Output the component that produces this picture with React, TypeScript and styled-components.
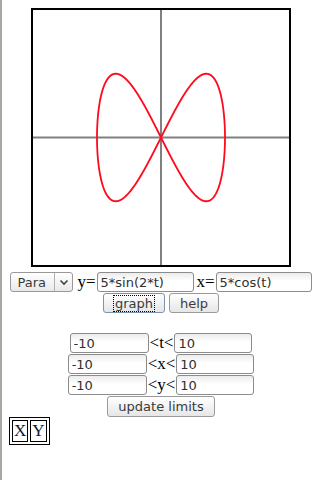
import React from "react";
import styled, { createGlobalStyle } from "styled-components";

const GlobalStyle = createGlobalStyle`
  html, body {
    margin: 0;
    padding: 0;
    background: #ffffff;
  }
  body {
    border-left: 2px solid #a9a7a1;
    min-height: 480px;
    box-sizing: border-box;
    padding: 8px 0 0 7px;
    font-family: "Liberation Serif", serif;
    font-size: 16px;
    color: #000;
  }
`;

const Page = styled.div`
  display: flex;
  flex-direction: column;
  align-items: flex-start;
  width: 304px;
`;

const Center = styled.div<{ $gap?: number }>`
  align-self: stretch;
  display: flex;
  flex-direction: column;
  align-items: center;
  margin-top: ${(p) => p.$gap ?? 0}px;
`;

const Plot = styled.div`
  width: 256px;
  height: 255px;
  border: 2px solid #000;
  background: #fff;
`;

const Row = styled.div<{ $top?: number }>`
  display: flex;
  align-items: center;
  justify-content: center;
  white-space: nowrap;
  margin-top: ${(p) => p.$top ?? 0}px;
`;

const Label = styled.span<{ $left?: number }>`
  font-family: "Liberation Serif", serif;
  font-size: 17px;
  line-height: 20px;
  color: #000;
  padding: 0 1px;
  margin-left: ${(p) => p.$left ?? 0}px;
`;

const Field = styled.input<{ $w: number }>`
  box-sizing: border-box;
  width: ${(p) => p.$w}px;
  height: 20px;
  margin: 0;
  padding: 0 3px;
  border: 1px solid #8c8c8c;
  border-radius: 3px;
  background: linear-gradient(#ececec, #ffffff 45%);
  font-family: "DejaVu Sans", sans-serif;
  font-size: 13px;
  color: #2f2f2f;
  outline: none;
`;

const SelectBox = styled.div`
  position: relative;
  box-sizing: border-box;
  width: 63px;
  height: 20px;
  border: 1px solid #999;
  border-radius: 3px;
  background: linear-gradient(#ffffff, #e9e9e9);
  display: flex;
  align-items: center;
`;

const SelectText = styled.span`
  flex: 1;
  padding-left: 6px;
  font-family: "DejaVu Sans", sans-serif;
  font-size: 13px;
  color: #3a3a3a;
`;

const SelectArrow = styled.span`
  width: 17px;
  height: 100%;
  border-left: 1px solid #b3b3b3;
  display: flex;
  align-items: center;
  justify-content: center;
`;

const Button = styled.button<{ $focus?: boolean; $h?: number }>`
  box-sizing: border-box;
  height: ${(p) => p.$h ?? 20}px;
  margin: 0 2px;
  padding: 0 10px;
  border: 1px solid ${(p) => (p.$focus ? "#7d93ad" : "#9a9a9a")};
  border-radius: 3px;
  background: linear-gradient(#ffffff, #e6e6e6);
  font-family: "DejaVu Sans", sans-serif;
  font-size: 13px;
  color: #3a3a3a;
  display: flex;
  align-items: center;
  justify-content: center;
`;

const FocusRing = styled.span`
  outline: 1px dotted #000;
  padding: 0 1px;
  line-height: 15px;
`;

const XYTable = styled.table`
  margin: 0;
  border: 1px solid #000;
  border-spacing: 2px;
`;

const XYCell = styled.td`
  border: 1px solid #000;
  padding: 1px;
  font-family: "Liberation Serif", serif;
  font-size: 17px;
  line-height: 18px;
  color: #0a1a3a;
`;

const W = 256;
const H = 255;

function curvePath() {
  const pts: string[] = [];
  for (let i = 0; i <= 2000; i++) {
    const t = -10 + (20 * i) / 2000;
    const x = 5 * Math.cos(t);
    const y = 5 * Math.sin(2 * t);
    const px = ((x + 10) / 20) * W;
    const py = ((10 - y) / 20) * H;
    pts.push(`${i === 0 ? "M" : "L"}${px.toFixed(2)} ${py.toFixed(2)}`);
  }
  return pts.join(" ");
}

const Graph = () => {
  const d = React.useMemo(curvePath, []);
  return (
    <Plot>
      <svg width={W} height={H} viewBox={`0 0 ${W} ${H}`}>
        <line x1={W / 2} y1={0} x2={W / 2} y2={H} stroke="#808080" strokeWidth={2} />
        <line x1={0} y1={H / 2} x2={W} y2={H / 2} stroke="#808080" strokeWidth={2} />
        <path d={d} fill="none" stroke="#ff0a1e" strokeWidth={1.8} />
      </svg>
    </Plot>
  );
};

const LimitRow = ({ v, top }: { v: string; top: number }) => (
  <Row $top={top}>
    <Field $w={79} defaultValue="-10" />
    <Label>&lt;{v}&lt;</Label>
    <Field $w={78} defaultValue="10" />
  </Row>
);

export default function App() {
  return (
    <>
      <GlobalStyle />
      <Page>
        <Center>
          <Graph />
          <Row $top={5}>
            <SelectBox>
              <SelectText>Para</SelectText>
              <SelectArrow>
                <svg width="10" height="7" viewBox="0 0 10 7">
                  <path d="M1.5 1.5 L5 5 L8.5 1.5" fill="none" stroke="#444" strokeWidth="1.6" />
                </svg>
              </SelectArrow>
            </SelectBox>
            <Label $left={3}>y=</Label>
            <Field $w={97} defaultValue="5*sin(2*t)" />
            <Label $left={2}>x=</Label>
            <Field $w={96} defaultValue="5*cos(t)" />
          </Row>
          <Row $top={1}>
            <Button $focus>
              <FocusRing>graph</FocusRing>
            </Button>
            <Button>help</Button>
          </Row>
        </Center>
        <Center $gap={20}>
          <LimitRow v="t" top={0} />
          <LimitRow v="x" top={1} />
          <LimitRow v="y" top={1} />
          <Row $top={1}>
            <Button $h={21}>update limits</Button>
          </Row>
        </Center>
        <XYTable>
          <tbody>
            <tr>
              <XYCell>X</XYCell>
              <XYCell>Y</XYCell>
            </tr>
          </tbody>
        </XYTable>
      </Page>
    </>
  );
}
